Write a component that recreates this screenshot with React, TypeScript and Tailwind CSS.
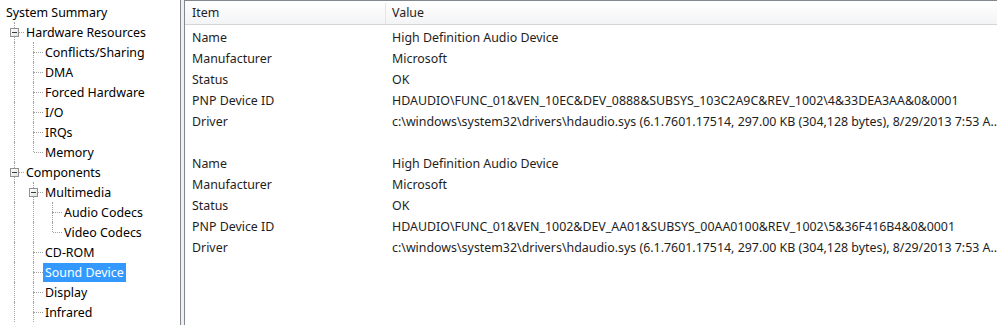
import React from 'react';

type Node = {
  label: string;
  depth: number;
  guides: boolean[]; // ancestor columns that still have siblings below
  last?: boolean;
  box?: boolean;
  selected?: boolean;
};

const TREE: Node[] = [
  { label: 'System Summary', depth: 0, guides: [] },
  { label: 'Hardware Resources', depth: 1, guides: [], box: true },
  { label: 'Conflicts/Sharing', depth: 2, guides: [true] },
  { label: 'DMA', depth: 2, guides: [true] },
  { label: 'Forced Hardware', depth: 2, guides: [true] },
  { label: 'I/O', depth: 2, guides: [true] },
  { label: 'IRQs', depth: 2, guides: [true] },
  { label: 'Memory', depth: 2, guides: [true], last: true },
  { label: 'Components', depth: 1, guides: [], box: true },
  { label: 'Multimedia', depth: 2, guides: [true], box: true },
  { label: 'Audio Codecs', depth: 3, guides: [true, true] },
  { label: 'Video Codecs', depth: 3, guides: [true, true], last: true },
  { label: 'CD-ROM', depth: 2, guides: [true] },
  { label: 'Sound Device', depth: 2, guides: [true], selected: true },
  { label: 'Display', depth: 2, guides: [true] },
  { label: 'Infrared', depth: 2, guides: [true] },
];

const driver = 'c:\\windows\\system32\\drivers\\hdaudio.sys (6.1.7601.17514, 297.00 KB (304,128 bytes), 8/29/2013 7:53 A..';

const ROWS: [string, string][] = [
  ['Name', 'High Definition Audio Device'],
  ['Manufacturer', 'Microsoft'],
  ['Status', 'OK'],
  ['PNP Device ID', 'HDAUDIO\\FUNC_01&VEN_10EC&DEV_0888&SUBSYS_103C2A9C&REV_1002\\4&33DEA3AA&0&0001'],
  ['Driver', driver],
  ['', ''],
  ['Name', 'High Definition Audio Device'],
  ['Manufacturer', 'Microsoft'],
  ['Status', 'OK'],
  ['PNP Device ID', 'HDAUDIO\\FUNC_01&VEN_1002&DEV_AA01&SUBSYS_00AA0100&REV_1002\\5&36F416B4&0&0001'],
  ['Driver', driver],
];

function Guide() {
  return (
    <div className="relative w-[19px] h-full shrink-0">
      <div className="absolute left-[9px] top-0 h-full border-l border-dotted border-[#a0a0a0]" />
    </div>
  );
}

function Connector({ last, box }: { last?: boolean; box?: boolean }) {
  return (
    <div className="relative w-[19px] h-full shrink-0">
      <div className="absolute left-[9px] top-0 h-[10px] border-l border-dotted border-[#a0a0a0]" />
      {!last && <div className="absolute left-[9px] top-[10px] h-[10px] border-l border-dotted border-[#a0a0a0]" />}
      <div className="absolute left-[10px] right-0 top-[10px] border-t border-dotted border-[#a0a0a0]" />
      {box && (
        <div className="absolute left-[5px] top-[6px] w-[9px] h-[9px] border border-[#919191] bg-gradient-to-br from-white to-[#e2e2e2] flex items-center justify-center">
          <div className="w-[5px] h-px bg-[#3a3a3a]" />
        </div>
      )}
    </div>
  );
}

function TreeRow({ n }: { n: Node }) {
  return (
    <div className="flex h-[20px] items-stretch pl-[5px]">
      {n.guides.map((g, i) => (g ? <Guide key={i} /> : <div key={i} className="w-[19px] shrink-0" />))}
      {n.depth > 0 && <Connector last={n.last} box={n.box} />}
      <div className="flex items-center">
        <span
          className={
            'px-[2px] h-[19px] leading-[19px] whitespace-nowrap ' +
            (n.selected ? 'bg-[#3399ff] text-white' : 'text-black') +
            (n.depth === 0 ? ' -ml-[1px]' : '')
          }
        >
          {n.label}
        </span>
      </div>
    </div>
  );
}

export default function App() {
  return (
    <div className="w-[997px] h-[325px] overflow-hidden flex bg-[#f0f0f0] font-['Segoe_UI','Noto_Sans',sans-serif] text-[12.4px]">
      {/* tree */}
      <div className="w-[181px] h-full bg-white border-r border-[#828790] pt-[2px] shrink-0">
        {TREE.map((n, i) => (
          <TreeRow key={i} n={n} />
        ))}
      </div>

      {/* list */}
      <div className="ml-[3px] flex-1 h-full bg-white border-l border-t border-[#828790] overflow-hidden">
        <div className="flex h-[24px] pt-[2px] bg-gradient-to-b from-white to-[#f3f4f5] border-b border-[#d5d5d5] text-[#1e1e1e]">
          <div className="w-[201px] shrink-0 border-r border-[#e3e5e8] pl-[7px] flex items-center">Item</div>
          <div className="flex-1 pl-[6px] flex items-center">Value</div>
        </div>
        <div className="pt-[3px]">
          {ROWS.map(([k, v], i) => (
            <div key={i} className="flex h-[21px] items-center text-[#1e1e1e] whitespace-nowrap">
              <div className="w-[201px] shrink-0 pl-[7px]">{k}</div>
              <div className="flex-1 pl-[6px] overflow-hidden">{v}</div>
            </div>
          ))}
        </div>
      </div>
    </div>
  );
}
